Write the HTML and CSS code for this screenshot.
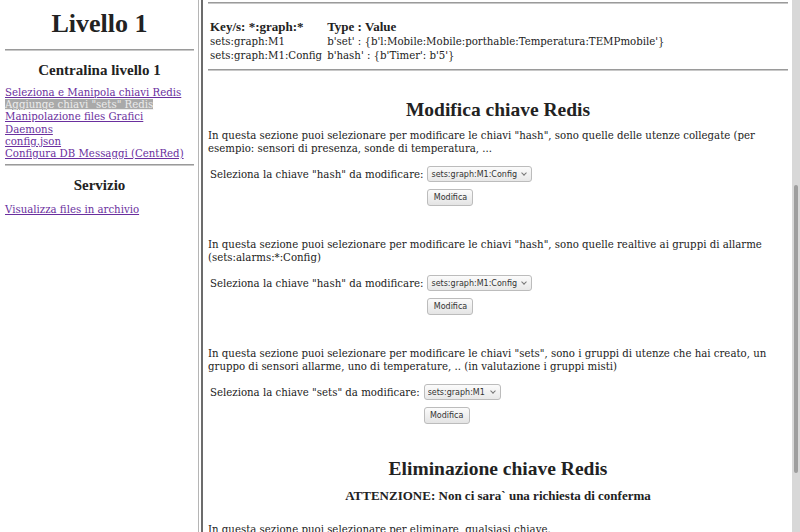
FILE: index.html
```
<!DOCTYPE html>
<html lang="it">

<head>
    <meta charset="UTF-8">
    <title>Livello 1</title>
    <link rel="stylesheet" href="styles.css">
</head>

<body>
    <div class="side">
        <h1>Livello 1</h1>
        <hr>
        <h3>Centralina livello 1</h3>
        <div class="menu">
            <a href="#">Seleziona e Manipola chiavi Redis</a><br>
            <a href="#" class="current">Aggiunge chiavi "sets" Redis</a><br>
            <a href="#">Manipolazione files Grafici</a><br>
            <a href="#">Daemons</a><br>
            <a href="#">config.json</a><br>
            <a href="#">Configura DB Messaggi (CentRed)</a>
        </div>
        <hr>
        <h3 class="service">Servizio</h3>
        <div class="menu">
            <a href="#">Visualizza files in archivio</a>
        </div>
    </div>

    <div class="divider"></div>

    <div class="main">
        <hr class="first">
        <table class="keys">
            <tr>
                <th>Key/s: *:graph:*</th>
                <th>Type : Value</th>
            </tr>
            <tr>
                <td>sets:graph:M1</td>
                <td>b'set' : {b'l:Mobile:Mobile:porthable:Temperatura:TEMPmobile'}</td>
            </tr>
            <tr>
                <td>sets:graph:M1:Config</td>
                <td>b'hash' : {b'Timer': b'5'}</td>
            </tr>
        </table>
        <hr class="second">

        <h2>Modifica chiave Redis</h2>
        <p>In questa sezione puoi selezionare per modificare le chiavi "hash", sono quelle delle utenze collegate (per esempio: sensori di presenza, sonde di temperatura, ...</p>
        <table class="pick">
            <tr>
                <td>Seleziona la chiave "hash" da modificare:</td>
                <td><span class="sel"><select><option>sets:graph:M1:Config</option></select></span></td>
            </tr>
            <tr>
                <td></td>
                <td><button>Modifica</button></td>
            </tr>
        </table>

        <p class="gap">In questa sezione puoi selezionare per modificare le chiavi "hash", sono quelle realtive ai gruppi di allarme (sets:alarms:*:Config)</p>
        <table class="pick">
            <tr>
                <td>Seleziona la chiave "hash" da modificare:</td>
                <td><span class="sel"><select><option>sets:graph:M1:Config</option></select></span></td>
            </tr>
            <tr>
                <td></td>
                <td><button>Modifica</button></td>
            </tr>
        </table>

        <p class="gap">In questa sezione puoi selezionare per modificare le chiavi "sets", sono i gruppi di utenze che hai creato, un gruppo di sensori allarme, uno di temperature, .. (in valutazione i gruppi misti)</p>
        <table class="pick">
            <tr>
                <td>Seleziona la chiave "sets" da modificare:</td>
                <td><span class="sel"><select><option>sets:graph:M1</option></select></span></td>
            </tr>
            <tr>
                <td></td>
                <td><button>Modifica</button></td>
            </tr>
        </table>

        <h2 class="delete">Eliminazione chiave Redis</h2>
        <h4>ATTENZIONE: Non ci sara` una richiesta di conferma</h4>
        <p class="last">In questa sezione puoi selezionare per eliminare, qualsiasi chiave.</p>
    </div>

    <div class="scrollbar">
        <div class="thumb"></div>
    </div>
</body>

</html>
```

FILE: styles.css
```
body {
    margin: 0;
    height: 532px;
    display: flex;
    overflow: hidden;
    background: #fff;
    color: #222;
    font-family: "Liberation Serif", serif;
    font-size: 13px;
}

hr {
    border: none;
    border-top: 1px solid #9a9a9a;
    border-bottom: 1px solid #c8c8c8;
    margin: 0;
}

a {
    color: #6a2f9e;
}

/* left frame */
.side {
    width: 198px;
    flex-shrink: 0;
    padding: 0 4px 0 5px;
    box-sizing: border-box;
}

.side h1 {
    font-size: 26px;
    text-align: center;
    margin: 10px 0 11px;
    line-height: 28px;
}

.side h3 {
    font-size: 15px;
    text-align: center;
    margin: 11px 0 8px;
    line-height: 17px;
}

.side h3.service {
    margin: 11px 0 10px;
}

.menu {
    font-family: "DejaVu Serif", serif;
    font-size: 10.2px;
    line-height: 12.2px;
    margin-bottom: 4px;
}

.menu a.current {
    background: #a9a9a9;
    color: #ececec;
}

.divider {
    width: 2px;
    flex-shrink: 0;
    border-left: 1px solid #b5b5b5;
    border-right: 2px solid #6c6c6c;
}

/* right frame */
.main {
    flex: 1;
    padding: 2px 4px 0 5px;
    overflow: hidden;
    font-family: "DejaVu Serif", serif;
    font-size: 10.2px;
    line-height: 13px;
}

.keys {
    margin: 14px 0 5px;
    border-spacing: 2px;
}

.keys th {
    font-family: "Liberation Serif", serif;
    font-size: 13px;
    text-align: left;
    padding: 0;
    height: 14px;
    line-height: 14px;
}

.keys td {
    padding: 0;
    height: 12px;
    line-height: 12px;
}

.keys th:first-child,
.keys td:first-child {
    padding-right: 3px;
}

.main h2 {
    font-family: "Liberation Serif", serif;
    font-size: 19.5px;
    text-align: center;
    margin: 27px 0 8px;
    line-height: 23px;
}

.main p {
    margin: 0;
}

.main p.gap {
    margin-top: 30px;
}

.pick {
    margin-top: 9px;
    border-spacing: 2px;
}

.pick td {
    padding: 0;
}

.pick td + td {
    padding-left: 2px;
}

.sel {
    position: relative;
    display: inline-block;
}

.sel::after {
    content: "";
    position: absolute;
    right: 6px;
    top: 5px;
    width: 3px;
    height: 3px;
    border-right: 1px solid #777;
    border-bottom: 1px solid #777;
    transform: rotate(45deg);
    pointer-events: none;
}

select {
    appearance: none;
    -webkit-appearance: none;
    font-family: "DejaVu Sans", sans-serif;
    font-size: 8px;
    height: 16px;
    padding: 0 14px 0 3px;
    border: 1px solid #bcbcbc;
    border-radius: 3px;
    background: linear-gradient(#fbfbfb, #e8e8e8);
    color: #333;
    vertical-align: middle;
}

button {
    font-family: "DejaVu Sans", sans-serif;
    font-size: 8px;
    height: 17px;
    width: 46px;
    padding: 0;
    margin-top: 5px;
    border: 1px solid #bcbcbc;
    border-radius: 3px;
    background: linear-gradient(#fbfbfb, #e4e4e4);
    color: #333;
}

.main h2.delete {
    margin: 31px 0 0;
}

.main h4 {
    font-family: "Liberation Serif", serif;
    font-size: 13px;
    text-align: center;
    margin: 8px 0 0;
    line-height: 15px;
}

.main p.last {
    margin-top: 20px;
}

.scrollbar {
    width: 8px;
    flex-shrink: 0;
    background: #d8d8d8;
    position: relative;
}

.scrollbar .thumb {
    position: absolute;
    left: 2px;
    width: 4px;
    top: 185px;
    height: 288px;
    border-radius: 2px;
    background: #9e9e9e;
}
```
